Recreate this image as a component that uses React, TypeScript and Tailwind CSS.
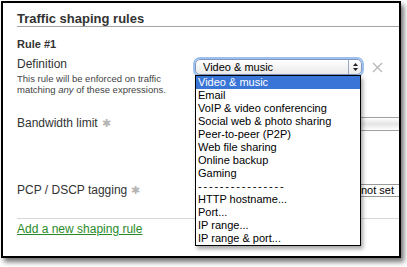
import React from "react";

const OPCOES = [
  "Video & music",
  "Email",
  "VoIP & video conferencing",
  "Social web & photo sharing",
  "Peer-to-peer (P2P)",
  "Web file sharing",
  "Online backup",
  "Gaming",
  "----------------",
  "HTTP hostname...",
  "Port...",
  "IP range...",
  "IP range & port...",
];

function Asterisco() {
  return <span className="ml-[4px] text-[11px] text-[#b5b5b5]">✱</span>;
}

function Setas() {
  return (
    <svg width="7" height="10" viewBox="0 0 7 10">
      <path d="M3.5 1 L6 4 L1 4 Z" fill="#222" />
      <path d="M3.5 9 L6 6 L1 6 Z" fill="#222" />
    </svg>
  );
}

function Fechar() {
  return (
    <svg width="11" height="11" viewBox="0 0 11 11">
      <path d="M1 1 L10 10 M10 1 L1 10" stroke="#b9b9b9" strokeWidth="1.4" />
    </svg>
  );
}

export default function App() {
  return (
    <div
      className="w-[407px] h-[267px] bg-white pl-px pt-px"
      style={{ fontFamily: '"Liberation Sans", Arial, sans-serif' }}
    >
      <div className="w-[400px] h-[257px] border-2 border-black bg-white shadow-[3px_4px_5px_rgba(0,0,0,0.55)] text-[#333]">
        {/* Titulo */}
        <div className="mt-[9px] ml-[14px] h-[15px] leading-[14px] text-[13px] font-bold border-b border-[#a3a3a3]">
          Traffic shaping rules
        </div>

        <div className="ml-[14px] mt-[11px] text-[11px] leading-[13px] font-bold">Rule #1</div>

        {/* Definicao */}
        <div className="mt-[6px] flex">
          <div className="w-[192px] pl-[14px]">
            <div className="text-[12px] leading-[14px]">Definition</div>
            <div className="mt-[3px] text-[9.5px] leading-[10.5px] text-[#444]">
              This rule will be enforced on traffic
              <br />
              matching <i>any</i> of these expressions.
            </div>
          </div>
          <div className="flex items-start pt-[2px]">
            <div className="relative">
              <div className="w-[167px] h-[16px] rounded-[5px] border border-[#7f97bd] shadow-[0_0_0_2px_#9dc0ee] bg-gradient-to-b from-white to-[#e9e9e9] flex items-center">
                <span className="flex-1 pl-[7px] text-[11px] leading-[14px] text-black">Video &amp; music</span>
                <span className="w-[13px] h-[14px] border-l border-[#9aa8c0] flex items-center justify-center">
                  <Setas />
                </span>
              </div>
              {/* Lista aberta */}
              <div className="absolute left-0 top-[16px] z-10 w-[166px] border border-black bg-white shadow-[2px_3px_4px_rgba(0,0,0,0.35)]">
                {OPCOES.map((o, i) => (
                  <div
                    key={o}
                    className={
                      i === 0
                        ? "h-[13px] leading-[13px] pl-[2px] text-[11px] bg-[#3875d7] text-white font-medium"
                        : i === 8
                        ? "h-[13px] leading-[13px] pl-[2px] text-[11px] text-black tracking-[1.8px]"
                        : "h-[13px] leading-[13px] pl-[2px] text-[11px] text-black"
                    }
                  >
                    {o}
                  </div>
                ))}
              </div>
            </div>
            <div className="ml-[10px] mt-[3px]">
              <Fechar />
            </div>
          </div>
        </div>

        {/* Banda */}
        <div className="mt-[21px] flex items-start">
          <div className="w-[192px] pl-[14px] text-[12px] leading-[14px]">
            Bandwidth limit
            <Asterisco />
          </div>
          <div className="flex-1 mt-[1px] h-[14px] border-y border-[#a0a0a0] bg-gradient-to-b from-white via-[#e4e4e4] to-white" />
        </div>

        {/* PCP */}
        <div className="mt-[52px] flex items-start">
          <div className="w-[192px] pl-[14px] text-[12px] leading-[14px]">
            PCP / DSCP tagging
            <Asterisco />
          </div>
          <div className="flex-1 mt-[1px] h-[13px] border-y border-[#9a9a9a] bg-white flex items-center justify-end pr-[5px] text-[11px] text-black">
            not set
          </div>
        </div>

        <div className="mt-[21px] ml-[14px] border-t border-[#d6d6d6]" />

        <div className="ml-[14px] mt-[3px] text-[12px] leading-[14px] text-[#2a8a2a] underline">
          Add a new shaping rule
        </div>
      </div>
    </div>
  );
}
